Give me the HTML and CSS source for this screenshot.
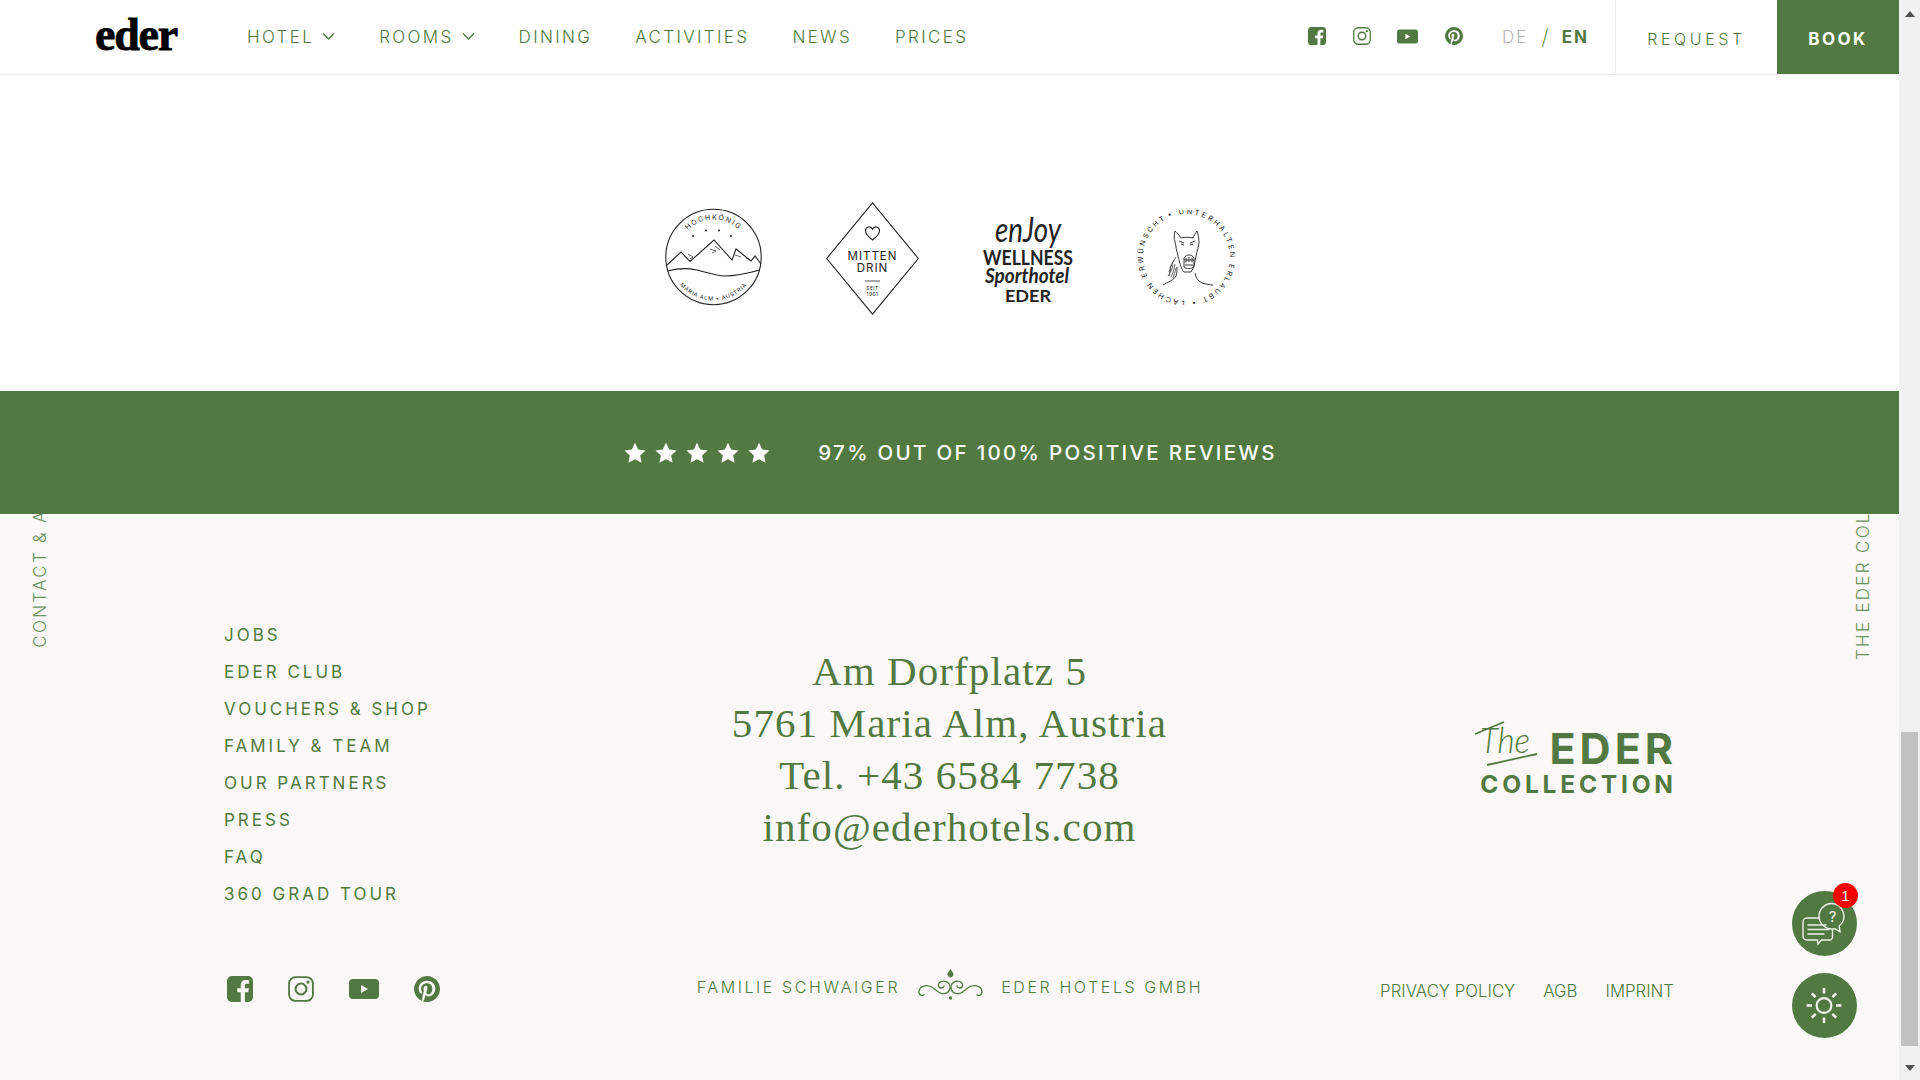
FILE: index.html
```html
<!DOCTYPE html>
<html lang="en">
<head>
<meta charset="utf-8">
<title>Sporthotel Eder</title>
<link rel="stylesheet" href="styles.css">
</head>
<body>
<svg class="defs" width="0" height="0" aria-hidden="true">
  <symbol id="i-fb" viewBox="0 0 24 24"><path d="M4.500 0h15A4.500 4.500 0 0 1 24 4.500v15a4.500 4.500 0 0 1-4.500 4.500H16.500v-9h3.200l.5-3.600h-3.700V9c0-1.100.5-1.800 1.900-1.800h2V4c-.6-.1-1.700-.2-2.900-.2-2.900 0-4.800 1.700-4.800 4.900v2.700H9.500V15h3.200v9H4.500A4.500 4.500 0 0 1 0 19.500v-15A4.500 4.500 0 0 1 4.500 0z"/></symbol>
  <symbol id="i-ig" viewBox="0 0 24 24"><rect x="1" y="1" width="22" height="22" rx="6" fill="none" stroke="currentColor" stroke-width="1.700"/><circle cx="12" cy="12" r="5" fill="none" stroke="currentColor" stroke-width="1.900"/><circle cx="18.400" cy="5.600" r="1.500"/></symbol>
  <symbol id="i-yt" viewBox="0 0 30 20"><path fill-rule="evenodd" d="M4 0h22a4 4 0 0 1 4 4v12a4 4 0 0 1-4 4H4a4 4 0 0 1-4-4V4a4 4 0 0 1 4-4zm8 6v8l7-4z"/></symbol>
  <symbol id="i-pin" viewBox="0 0 24 24"><path d="M12 0a12 12 0 0 0-4.370 23.170c-.1-.95-.2-2.400.04-3.440l1.400-5.960s-.35-.72-.35-1.780c0-1.660.96-2.900 2.160-2.900 1.020 0 1.510.77 1.510 1.690 0 1.030-.65 2.560-.99 3.980-.28 1.190.6 2.160 1.770 2.160 2.130 0 3.760-2.240 3.760-5.470 0-2.860-2.060-4.860-4.990-4.860-3.400 0-5.400 2.550-5.400 5.190 0 1.030.4 2.130.89 2.730.1.12.11.22.08.34l-.33 1.360c-.05.22-.17.27-.4.16-1.500-.7-2.430-2.890-2.430-4.650 0-3.780 2.750-7.260 7.920-7.260 4.160 0 7.390 2.970 7.390 6.930 0 4.130-2.600 7.460-6.220 7.460-1.210 0-2.360-.63-2.750-1.380l-.75 2.850c-.27 1.040-1 2.350-1.490 3.150A12 12 0 1 0 12 0z"/></symbol>
  <symbol id="i-star" viewBox="0 0 24 24"><path d="M12 .8l3.500 7.400 8 1-5.900 5.500 1.600 8-7.200-4-7.200 4 1.600-8L.5 9.200l8-1z"/></symbol>
  <symbol id="i-chev" viewBox="0 0 12 8"><path d="M1 1.200l5 5.200 5-5.200" fill="none" stroke="currentColor" stroke-width="1.300"/></symbol>
</svg>
<div class="app">
  <div class="page">
    <header class="topbar">
      <a class="brand">eder</a>
      <nav class="mainnav">
        <a class="navitem">HOTEL <svg class="chev"><use href="#i-chev"/></svg></a>
        <a class="navitem">ROOMS <svg class="chev"><use href="#i-chev"/></svg></a>
        <a class="navitem">DINING</a>
        <a class="navitem">ACTIVITIES</a>
        <a class="navitem">NEWS</a>
        <a class="navitem">PRICES</a>
      </nav>
      <div class="topsocial">
        <svg class="ts ts-fb"><use href="#i-fb"/></svg>
        <svg class="ts ts-ig"><use href="#i-ig"/></svg>
        <svg class="ts ts-yt"><use href="#i-yt"/></svg>
        <svg class="ts ts-pin"><use href="#i-pin"/></svg>
      </div>
      <div class="lang"><span class="lang-off">DE</span><span class="lang-sep">/</span><span class="lang-on">EN</span></div>
      <a class="request">REQUEST</a>
      <a class="book">BOOK</a>
    </header>

    <section class="badges">
      <svg class="badge-hoch" viewBox="0 0 97 98" fill="none" stroke="#222">
        <defs>
          <path id="arc-top" d="M11.500 48.500a37 37 0 0 1 74 0"/>
          <path id="arc-bot" d="M4.500 48.500a44 44 0 0 0 88 0"/>
        </defs>
        <circle cx="48.500" cy="49" r="47.700" stroke-width="1.100"/>
        <text class="bt bt-hoch"><textPath href="#arc-top" startOffset="50%" text-anchor="middle">HOCHKÖNIG</textPath></text>
        <text class="bt bt-maria"><textPath href="#arc-bot" startOffset="50%" text-anchor="middle">MARIA ALM • AUSTRIA</textPath></text>
        <g class="bt-fill"><circle cx="28" cy="28" r="1"/><circle cx="41" cy="22.500" r="1"/><circle cx="54" cy="22.500" r="1"/><circle cx="66" cy="28" r="1"/></g>
        <path stroke-width="1.100" d="M2 57l14-13 9 9.500L49 32l18 20 4-11 15 12 4-5 6 8"/>
        <path stroke-width=".7" d="M23 46l5 3-3 2M45 41l6 2-4 2M70 47l6 2M81 50l3 1M28 51l5-5M50 38l5 4"/>
        <path stroke-width="1.100" d="M3 63c10-3 20-3 29-1 9 2 18 6 28 6 13 0 24-3 35-6"/>
      </svg>
      <svg class="badge-mitten" viewBox="0 0 93 113" fill="none" stroke="#222">
        <path stroke-width="1.100" d="M46.500 .8L92.300 56.500 46.500 112.200 .7 56.500z"/>
        <path stroke-width="1.100" d="M46.500 38c-4-3.200-7-5.600-7-9 0-4.600 5.400-5.400 7-1.800 1.600-3.600 7-2.800 7 1.800 0 3.400-3 5.800-7 9z"/>
        <text class="bt bt-mitten" x="46.500" y="58" text-anchor="middle">MITTEN</text>
        <text class="bt bt-mitten" x="46.500" y="69.500" text-anchor="middle">DRIN</text>
        <path stroke-width=".8" d="M39 79h15"/>
        <text class="bt bt-seit" x="46.500" y="88" text-anchor="middle">SEIT</text>
        <text class="bt bt-seit" x="46.500" y="94" text-anchor="middle">1961</text>
      </svg>
      <svg class="badge-enjoy" viewBox="0 0 90 89">
        <text class="ej ej-script" x="45" y="29" text-anchor="middle" textLength="66" lengthAdjust="spacingAndGlyphs">enJoy</text>
        <text class="ej ej-well" x="45" y="52" text-anchor="middle" textLength="90" lengthAdjust="spacingAndGlyphs">WELLNESS</text>
        <text class="ej ej-sport" x="44" y="70" text-anchor="middle" textLength="84" lengthAdjust="spacingAndGlyphs">Sporthotel</text>
        <text class="ej ej-eder" x="45" y="89" text-anchor="middle" textLength="46" lengthAdjust="spacingAndGlyphs">EDER</text>
      </svg>
      <svg class="badge-horse" viewBox="0 0 99 95" fill="none" stroke="#222">
        <defs>
          <path id="arc-ring" transform="rotate(-24 49.500 47.500)" d="M49.500 4a43.500 43.500 0 1 1-.01 0"/>
        </defs>
        <text class="bt bt-ring"><textPath href="#arc-ring" textLength="268">• UNTERHALTEN ERLAUBT • LACHEN ERWÜNSCHT</textPath></text>
        <g stroke-width=".9">
          <path d="M38 21c-1 4-1 8 0 11 .8 3 1.500 9 3 14 1.500 6 3 13 6 16h7c3-4 4-10 5-16 1-5 3-10 3-14 0-4-1-8-2-11-2 2-3 5-4 7-4-1-8-1-12 0-1.500-3-4-5-6-7z"/>
          <path d="M42 31l5 2M58 31l-5 2M44 34l3 1M56 34l-3 1M47 48c2-4 8-4 10 0v9c-2 2-8 2-10 0z"/>
          <path d="M47 50h10M49 47.500v5M52 47v5M55 47.500v5M48 55h8"/>
          <path d="M26 75c5-3 11-5 13-9 1-3 1-6 1-9M58 63c1 5 3 8 7 10 4 1 8 2 11 2"/>
          <path stroke-width=".7" d="M39 47c-2 4-5 7-6 11M37 50c-2 5-4 8-5 12M36 55c-1 5-3 8-5 11M38 54c-1 6-2 9-4 13M39 58c-1 4-2 7-3 10M34 58l-2 8"/>
        </g>
      </svg>
    </section>

    <section class="reviews">
      <div class="stars">
        <svg class="star"><use href="#i-star"/></svg>
        <svg class="star"><use href="#i-star"/></svg>
        <svg class="star"><use href="#i-star"/></svg>
        <svg class="star"><use href="#i-star"/></svg>
        <svg class="star"><use href="#i-star"/></svg>
      </div>
      <span class="reviews-text">97% OUT OF 100% POSITIVE REVIEWS</span>
    </section>

    <footer class="footer">
      <span class="sidelabel sidelabel-left">CONTACT &amp; ARRIVAL</span>
      <span class="sidelabel sidelabel-right">THE EDER COLLECTION</span>
      <div class="footgrid">
        <ul class="footlinks">
          <li>JOBS</li>
          <li>EDER CLUB</li>
          <li>VOUCHERS &amp; SHOP</li>
          <li>FAMILY &amp; TEAM</li>
          <li>OUR PARTNERS</li>
          <li>PRESS</li>
          <li>FAQ</li>
          <li>360 GRAD TOUR</li>
        </ul>
        <address class="contact">
          <div>Am Dorfplatz 5</div>
          <div>5761 Maria Alm, Austria</div>
          <div>Tel. +43 6584 7738</div>
          <div>info@ederhotels.com</div>
        </address>
        <div class="collection">
          <div class="coll-top">
            <svg class="coll-the" viewBox="0 0 64 46">
              <text class="coll-the-text" x="6" y="32" textLength="50" lengthAdjust="spacingAndGlyphs">The</text>
              <path d="M13 44l50-11M1 13l29-12" fill="none" stroke="#537942" stroke-width="1.800"/>
            </svg>
            <span class="coll-eder">EDER</span>
          </div>
          <div class="coll-bottom">COLLECTION</div>
        </div>
        <div class="footsocial">
          <svg class="fs fs-fb"><use href="#i-fb"/></svg>
          <svg class="fs fs-ig"><use href="#i-ig"/></svg>
          <svg class="fs fs-yt"><use href="#i-yt"/></svg>
          <svg class="fs fs-pin"><use href="#i-pin"/></svg>
        </div>
        <div class="company">
          <span>FAMILIE SCHWAIGER</span>
          <svg class="orn" viewBox="0 0 70 31" fill="none" stroke="#537942" stroke-width="1.300">
            <g id="orn-half">
              <path d="M9 25.500c-2 2-6 .5-5.500-3C4 18 9 15.500 14 17c5 1.500 7 6 12 7.500 5 1 9-2 8.500-7-.5-4-5-6.500-9-5-3.500 1.500-3.500 6 0 6.500 2 .2 3-1 3-2.500"/>
            </g>
            <use href="#orn-half" transform="matrix(-1 0 0 1 70 0)"/>
            <path fill="#537942" stroke="none" d="M35 0c1.500 2.200 3 3.800 3 5.500S36.500 8 35 8.500c-1.500-.5-3-1.300-3-3S33.500 2.200 35 0z"/>
            <circle cx="35" cy="29" r="1.700" fill="#537942" stroke="none"/>
          </svg>
          <span>EDER HOTELS GMBH</span>
        </div>
        <div class="legal">
          <a>PRIVACY POLICY</a>
          <a>AGB</a>
          <a>IMPRINT</a>
        </div>
      </div>
    </footer>

    <div class="floaters">
      <div class="fab">
        <svg class="fab-icon" viewBox="0 0 65 65" fill="none" stroke="#eef3ea" stroke-width="1.400">
          <path d="M15 27h13M39 49h-9.500l-3.500 4-.5-4H15a4 4 0 0 1-4-4V31a4 4 0 0 1 4-4M40.500 38.500V45a4 4 0 0 1-1.500 4"/>
          <path d="M15.500 34h19M15.500 38.500h22M15.500 43h17"/>
          <path d="M40 12.500a12.700 12.700 0 1 0 2.500 25.100l5.500 3-.8-5.600A12.700 12.700 0 0 0 40 12.500z"/>
          <text class="fab-q" x="40.500" y="31" text-anchor="middle">?</text>
        </svg>
        <span class="fab-badge">1</span>
      </div>
      <div class="fab">
        <svg class="fab-icon" viewBox="0 0 65 65" fill="none" stroke="#eef3ea" stroke-width="2.600">
          <circle cx="32" cy="32.500" r="7.400" stroke-width="2.200"/>
          <path d="M32 15v5.500M32 44.500V50M14.500 32.500H20M44 32.500h5.500M19.800 20.300l3.800 3.800M40.400 40.900l3.800 3.800M44.200 20.300l-3.800 3.800M23.600 40.900l-3.800 3.800"/>
        </svg>
      </div>
    </div>
  </div>
  <aside class="scrollbar">
    <svg class="sb-arrow" viewBox="0 0 10 6"><path d="M5 0l5 6H0z"/></svg>
    <div class="sb-track"><div class="sb-thumb"></div></div>
    <svg class="sb-arrow" viewBox="0 0 10 6"><path d="M0 0h10L5 6z"/></svg>
  </aside>
</div>
</body>
</html>
```

FILE: styles.css
```css
* { box-sizing: border-box; }
html, body { margin: 0; padding: 0; height: 100%; overflow: hidden; }
body { font-family: "Inter", "Liberation Sans", sans-serif; color: #537942; background: #fff; }
.defs { position: absolute; }
ul { list-style: none; margin: 0; padding: 0; }
address { font-style: normal; }
svg { display: block; }
.ts, .fs, .star, .chev { fill: currentColor; }

.app { display: flex; width: 1920px; height: 1080px; }
.page { position: relative; width: 1899px; height: 1080px; display: flex; flex-direction: column; overflow: hidden; }

/* header */
.topbar { flex: none; height: 75px; display: flex; align-items: stretch; padding-left: 95px; border-bottom: 1px solid #eeeeee; background: #fff; }
.brand { width: 83px; margin-right: 69px; align-self: center; font-family: "Liberation Serif", serif; font-weight: 700; font-size: 46px; line-height: 40px; color: #000; letter-spacing: -1.200px; -webkit-text-stroke: .8px #000; white-space: nowrap; transform: translateY(-2px); }
.mainnav { display: flex; align-items: center; gap: 43px; }
.navitem { display: flex; align-items: center; gap: 8px; font-size: 17px; font-weight: 300; letter-spacing: 2.350px; white-space: nowrap; }
.chev { width: 13px; height: 9px; margin-top: -2px; margin-right: 1px; }
.topsocial { margin-left: auto; display: flex; align-items: center; gap: 27px; }
.ts { height: 18px; width: 18px; margin-top: -2px; }
.ts-yt { width: 21px; height: 15px; margin-left: -1px; }
.lang { display: flex; align-items: center; margin-left: 39px; margin-right: 26px; font-size: 17px; letter-spacing: 2px; }
.lang-off { color: #b5b5b5; font-weight: 300; }
.lang-sep { margin: 0 13px; font-size: 22px; font-weight: 200; letter-spacing: 0; }
.lang-on { font-weight: 700; }
.request { width: 162px; display: flex; align-items: center; justify-content: center; border-left: 1px solid #eeeeee; padding-top: 3px; font-size: 16px; font-weight: 300; letter-spacing: 3.600px; }
.book { width: 122px; display: flex; align-items: center; justify-content: center; padding-top: 3px; background: #537942; color: #fff; font-size: 17px; font-weight: 700; letter-spacing: 2.400px; }

/* badges */
.badges { flex: none; height: 316px; display: flex; justify-content: center; gap: 64px; padding-top: 127px; padding-left: 1px; background: #fff; }
.badge-hoch { width: 97px; height: 98px; margin-top: 6px; }
.badge-mitten { width: 93px; height: 113px; }
.badge-enjoy { width: 90px; height: 89px; margin-top: 11px; overflow: visible; }
.badge-horse { width: 99px; height: 95px; margin-top: 8px; }
.bt { font-family: "Inter", sans-serif; fill: #222; stroke: none; }
.bt-hoch { font-size: 7px; letter-spacing: 1.600px; }
.bt-maria { font-size: 5.500px; letter-spacing: .8px; }
.bt-fill { fill: #222; stroke: none; }
.bt-mitten { font-size: 11.500px; letter-spacing: 1px; }
.bt-seit { font-size: 4.800px; letter-spacing: .5px; }
.bt-ring { font-size: 7px; }
.ej { fill: #222; }
.ej-script { font-family: "Lato", sans-serif; font-style: italic; font-size: 35px; }
.ej-well { font-family: "Lato", sans-serif; font-weight: 700; font-size: 21px; }
.ej-sport { font-family: "Lato", sans-serif; font-style: italic; font-weight: 700; font-size: 21px; }
.ej-eder { font-family: "Lato", sans-serif; font-weight: 700; font-size: 17px; }

/* reviews band */
.reviews { flex: none; height: 123px; display: flex; align-items: center; justify-content: center; gap: 48px; padding-left: 2px; background: #537942; color: #fff; position: relative; z-index: 1; }
.stars { display: flex; gap: 9px; }
.star { width: 22px; height: 22px; }
.reviews-text { font-size: 20.500px; font-weight: 500; letter-spacing: 2.300px; white-space: nowrap; }

/* footer */
.footer { flex: 1; position: relative; background: #faf9f8; overflow: hidden; padding: 103px 226px 0 224px; }
.sidelabel { position: absolute; writing-mode: vertical-rl; transform: rotate(180deg); font-size: 17px; font-weight: 300; letter-spacing: 2.300px; white-space: nowrap; color: #6d8f5e; }
.sidelabel-left { left: 30px; bottom: 432px; }
.sidelabel-right { right: 26px; bottom: 420px; }
.footgrid { display: grid; grid-template-columns: 1fr auto 1fr; row-gap: 60px; }
.footlinks { display: flex; flex-direction: column; }
.footlinks li { height: 37px; line-height: 37px; font-size: 17px; font-weight: 400; letter-spacing: 3px; white-space: nowrap; }
.contact { padding-top: 28px; padding-left: 2px; text-align: center; font-family: "Liberation Serif", serif; font-size: 41px; line-height: 52px; letter-spacing: 1.100px; white-space: nowrap; }
.collection { justify-self: end; align-self: start; margin-top: 104px; display: flex; flex-direction: column; align-items: flex-end; }
.coll-top { display: flex; align-items: flex-end; gap: 11px; }
.coll-the { width: 64px; height: 46px; margin-bottom: -3px; }
.coll-the-text { font-family: "Lato", sans-serif; font-style: italic; font-weight: 300; font-size: 36px; fill: #537942; }
.coll-eder { font-size: 43px; line-height: 32px; font-weight: 700; letter-spacing: 4px; margin-right: -4px; }
.coll-bottom { margin-top: 10px; font-size: 24.500px; line-height: 20px; font-weight: 700; letter-spacing: 3.800px; margin-right: -3.800px; }
.footsocial { display: flex; align-items: center; align-self: start; gap: 35px; margin-top: 3px; padding-left: 3px; }
.fs { width: 26px; height: 26px; }
.fs-yt { width: 30px; height: 20px; }
.company { display: flex; align-items: flex-start; justify-content: center; gap: 15px; align-self: start; margin-top: -4px; padding-left: 3px; font-size: 16px; font-weight: 300; letter-spacing: 2.600px; white-space: nowrap; }
.company span { margin-top: 8px; }
.orn { width: 71px; height: 31px; }
.legal { justify-self: end; align-self: start; display: flex; gap: 28px; margin-top: 8px; margin-right: -1px; font-size: 16.800px; font-weight: 300; white-space: nowrap; }

/* floating buttons */
.floaters { position: absolute; left: 1792px; top: 891px; display: flex; flex-direction: column; gap: 17px; }
.fab { position: relative; width: 65px; height: 65px; border-radius: 50%; background: #537942; }
.fab-icon { width: 65px; height: 65px; }
.fab-q { font-family: "Inter", sans-serif; font-size: 15px; font-weight: 400; fill: #eef3ea; stroke: none; }
.fab-badge { position: absolute; top: -8px; left: 41px; width: 25px; height: 25px; border-radius: 50%; background: #f60000; color: #fff; font-family: "Liberation Sans", sans-serif; font-size: 15px; line-height: 25px; text-align: center; }

/* scrollbar */
.scrollbar { width: 21px; height: 1080px; background: #f1f1f1; display: flex; flex-direction: column; align-items: center; justify-content: space-between; padding: 11px 0 9px; }
.sb-track { flex: 1; width: 100%; position: relative; }
.sb-thumb { position: absolute; top: 715px; left: 2px; width: 17px; height: 314px; background: #c1c1c1; }
.sb-arrow { width: 10px; height: 6px; fill: #505050; }
```
